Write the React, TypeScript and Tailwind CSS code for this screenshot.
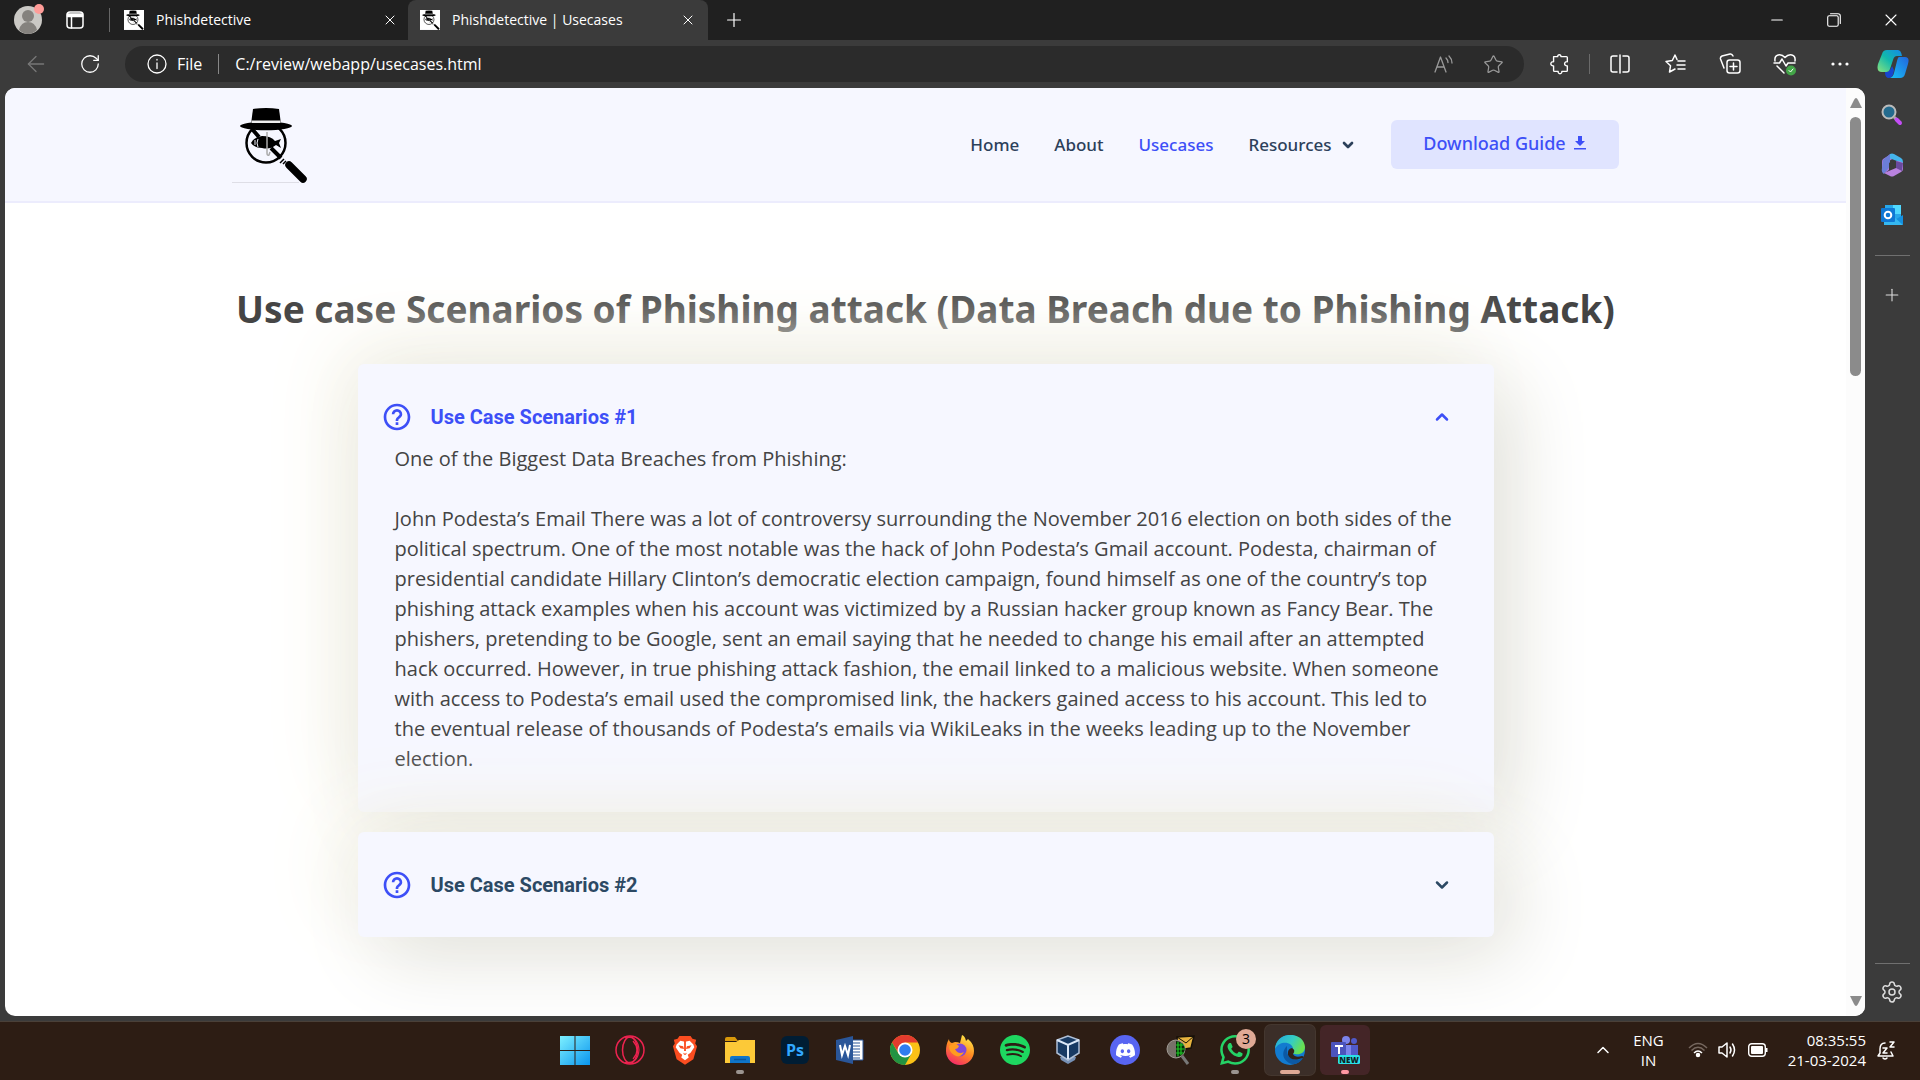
import React from "react";
import { ChevronUp, ChevronDown, Plus, X, Minus, ArrowLeft, RotateCw, Star, Settings } from "lucide-react";
import { BiHelpCircle } from "react-icons/bi";
import { SiDiscord, SiSpotify, SiWhatsapp } from "react-icons/si";

const paragraph =
  "John Podesta’s Email There was a lot of controversy surrounding the November 2016 election on both sides of the political spectrum. One of the most notable was the hack of John Podesta’s Gmail account. Podesta, chairman of presidential candidate Hillary Clinton’s democratic election campaign, found himself as one of the country’s top phishing attack examples when his account was victimized by a Russian hacker group known as Fancy Bear. The phishers, pretending to be Google, sent an email saying that he needed to change his email after an attempted hack occurred. However, in true phishing attack fashion, the email linked to a malicious website. When someone with access to Podesta’s email used the compromised link, the hackers gained access to his account. This led to the eventual release of thousands of Podesta’s emails via WikiLeaks in the weeks leading up to the November election.";

function Detective({ className }: { className: string }) {
  return (
    <svg viewBox="7 5 76 78" className={className} aria-hidden="true">
      <path d="M7 81.500H74" stroke="#dedee6" strokeWidth="1" />
      <circle cx="41" cy="42" r="19.500" fill="none" stroke="#000" strokeWidth="2.500" />
      <path d="m27 28 7 8M46 47l10 10" stroke="#000" strokeWidth="4" />
      <path d="M26 42q3-6 11-7 9 0 13 5l6-2-2 4 2 5-5-3q-6 5-14 3-8 0-11-5Z" />
      <path d="M30 39v5M33 38q-2 4 0 8" stroke="#f6f6ff" strokeWidth="1" fill="none" />
      <path d="M42 31v21q0 3 2 2l1-3" stroke="#aaa" strokeWidth="1.500" fill="none" />
      <path d="m59 58-4 4m6-2-3 3" stroke="#000" strokeWidth="1.500" />
      <path d="m64 64 14 14" stroke="#000" strokeWidth="7.500" strokeLinecap="round" />
      <ellipse cx="41" cy="25" rx="26" ry="4.200" />
      <path d="M28 8q13-2 26 0l2 15H26Z" />
      <path d="M26.500 19.500h29v2.500h-29Z" fill="#eee" />
    </svg>
  );
}

function Favicon() {
  return (
    <span className="flex size-5 shrink-0 items-center justify-center bg-white">
      <Detective className="size-5" />
    </span>
  );
}

function Tab({ title, active }: { title: string; active?: boolean }) {
  return (
    <div className={active ? "flex h-10 w-[300px] items-center rounded-t-lg bg-[#3b3b3b] px-3" : "flex h-10 w-[298px] items-center pr-2.5 pl-3.5"}>
      <Favicon />
      <span className="ml-3 flex-1 text-sm">{title}</span>
      <button aria-label={"Close " + title}><X size={16} strokeWidth={1.5} /></button>
    </div>
  );
}

function Tool({ label, children }: { label: string; children: React.ReactNode }) {
  return <button aria-label={label} className="flex w-[55px] justify-center">{children}</button>;
}

const line = { fill: "none", stroke: "currentColor", strokeWidth: 1.5, strokeLinecap: "round" as const, strokeLinejoin: "round" as const };

function BrowserBars() {
  return (
    <header className="text-white">
      <div className="flex h-10 items-center bg-[#202020]">
        <button aria-label="Profile" className="relative ml-[14px] size-7">
          <svg viewBox="0 0 28 28" className="size-7"><circle cx="14" cy="14" r="14" fill="#cbc9c5" /><circle cx="14" cy="10" r="6" fill="#85827e" /><path d="M5 24q2-8 9-8t9 8q-9 8-18 0Z" fill="#85827e" /></svg>
          <span className="absolute -top-0.5 -right-0.5 size-2.5 rounded-full bg-[#ff9c98]" />
        </button>
        <button aria-label="Tab actions" className="ml-[23px]">
          <svg viewBox="0 0 20 20" className="size-5" {...line}><rect x="2" y="2" width="16" height="16" rx="3" /><path d="M2.500 4h15v2.500h-15Z" fill="currentColor" /><path d="M6.500 7v11" /></svg>
        </button>
        <span className="ml-6 h-6 w-px bg-[#666]" />
        <Tab title="Phishdetective" />
        <Tab title="Phishdetective | Usecases" active />
        <button aria-label="New tab" className="ml-[15px]"><Plus size={22} strokeWidth={1.3} /></button>
        <div className="ml-auto flex items-center pr-px">
          <button aria-label="Minimize" className="flex w-[57px] justify-center"><Minus size={18} strokeWidth={1.5} /></button>
          <button aria-label="Restore" className="flex w-[57px] justify-center"><svg viewBox="0 0 14 14" className="size-[14px]" {...line} strokeWidth={1.1}><rect x=".7" y="2.700" width="10.500" height="10.500" rx="1.500" /><path d="M3.500.7h7.500q2.300 0 2.300 2.300v7.500" /></svg></button>
          <button aria-label="Close window" className="flex w-[57px] justify-center"><X size={20} strokeWidth={1.3} /></button>
        </div>
      </div>
      <div className="flex h-12 items-center bg-[#3b3b3b]">
        <button aria-label="Back" className="ml-[23px] text-[#777]"><ArrowLeft size={26} strokeWidth={1.2} /></button>
        <button aria-label="Refresh" className="mr-6 ml-[30px]"><RotateCw size={22} strokeWidth={1.4} /></button>
        <div className="flex h-9 flex-1 items-center rounded-full bg-[#2b2b2b] pr-5 pl-[22px]">
          <svg viewBox="0 0 20 20" className="size-5" {...line} strokeWidth={1.3}><circle cx="10" cy="10" r="9" /><path d="M10 9v5.500M10 5.500v.5" /></svg>
          <span className="ml-2.5 text-base">File</span>
          <span className="mx-4 h-5 w-px bg-[#888]" />
          <input aria-label="Address" defaultValue="C:/review/webapp/usecases.html" className="min-w-0 flex-1 bg-transparent text-base outline-none" />
          <button aria-label="Read aloud" className="text-[#999]"><svg viewBox="0 0 22 22" className="size-[22px]" {...line} strokeWidth={1.3}><path d="m2 19 5.500-15L13 19M4 14h7M13 5q2 2 2 4.500M16 3q3 3 3 7" /></svg></button>
          <button aria-label="Add to favorites" className="ml-7 text-[#999]"><Star size={21} strokeWidth={1.4} /></button>
        </div>
        <div className="ml-2 flex items-center">
          <Tool label="Extensions"><svg viewBox="0 0 24 24" className="size-[22px]" {...line}><path d="M5 4h4.500C9 1.500 13.500 1 13 4h6q1 0 1 1v4.500c-4-.5-4 5 0 4.500v5q0 1-1 1h-5c.5 3.500-4.500 3.500-4 0H6q-1 0-1-1v-5c-4 .5-4-5 0-4.500Z" /></svg></Tool>
          <span className="mx-0.5 h-5 w-px bg-[#6a6a6a]" />
          <Tool label="Split screen"><svg viewBox="0 0 22 22" className="size-[22px]" {...line}><path d="M8 3H4Q2 3 2 5v12q0 2 2 2h4M14 3h4q2 0 2 2v12q0 2-2 2h-4M11 2v18" /></svg></Tool>
          <Tool label="Favorites"><svg viewBox="0 0 22 22" className="size-[22px]" {...line}><path d="M13 6.500 11 2 8.300 7.500 2 8.500l4.500 4.300-1 6.200 5.500-3M14 8h7M13 12h8M14 16h7" /></svg></Tool>
          <Tool label="Collections"><svg viewBox="0 0 22 22" className="size-[22px]" {...line}><rect x="8" y="7" width="13" height="13" rx="2.500" /><path d="M14.500 10v7M11 13.500h7M5 15 1.500 6Q1 4 3 3l8-2q2-.5 3 2" /></svg></Tool>
          <Tool label="Browser essentials"><svg viewBox="0 0 24 24" className="size-6" {...line}><path d="M2 9C1 2 8 1 12 5.500 16 1 23 2 22 9M1 11h5.500L9 7l4 7 2-3h7M4 14l7 7" /><circle cx="18" cy="18.500" r="5" fill="#43a548" stroke="none" /><path d="m16 18.500 1.500 1.500 2.500-3" strokeWidth="1" /></svg></Tool>
          <Tool label="Menu"><svg viewBox="0 0 18 4" className="h-1 w-[18px]" fill="currentColor"><circle cx="2" cy="2" r="1.600" /><circle cx="9" cy="2" r="1.600" /><circle cx="16" cy="2" r="1.600" /></svg></Tool>
          <button aria-label="Copilot" className="mr-[11px] ml-2.5">
            <svg viewBox="0 0 32 30" className="h-[30px] w-8">
              <defs><linearGradient id="cpa" x1="0" y1="1" x2="1" y2="0"><stop stopColor="#8be37e" /><stop offset=".5" stopColor="#11b9ac" /><stop offset="1" stopColor="#1489e8" /></linearGradient><linearGradient id="cpb" x1="0" y1="1" x2="1" y2="0"><stop stopColor="#18c1f5" /><stop offset="1" stopColor="#2265dd" /></linearGradient></defs>
              <path d="M8 23q5 0 7-6l2 4q-1 8-5 8t-4-6Z" fill="#1746cf" /><path d="M10 1h11q3 0 4 6h-5q-3 0-4 4l-3 9q-1 3-4 3H5q-6 0-4-8L5 5q1-4 5-4Z" fill="url(#cpa)" /><path d="M22 8h6q5 0 3 7l-3 10q-1 4-5 4H13q3-1 4-5l3-12q1-4 2-4Z" fill="url(#cpb)" />
            </svg>
          </button>
        </div>
      </div>
    </header>
  );
}

function SiteHeader() {
  return (
    <div className="border-b-2 border-[#ececfd] bg-[#f6f7ff]">
      <div className="mx-auto flex h-[113px] w-full max-w-[1388px] items-center">
        <a href="#home" aria-label="Phishdetective home"><Detective className="h-[78px] w-[76px]" /></a>
        <nav className="mr-px ml-auto flex items-center gap-[35px] font-['Noto_Sans'] text-[17px] font-medium text-[#2c405a]">
          <a href="#home">Home</a>
          <a href="#about">About</a>
          <a href="#usecases" className="text-[#3d4ff7]">Usecases</a>
          <button className="flex items-center gap-2">Resources <ChevronDown size={16} strokeWidth={4} /></button>
          <a href="#download" className="flex h-[49px] w-[228px] items-center justify-center gap-2 rounded-md bg-[#e0e4ff] pb-1 text-lg text-[#3d4ff7]">
            Download Guide
            <svg viewBox="0 0 12 14" className="h-[14px] w-3" fill="currentColor"><path d="M4 0h4v5h3L6 10 1 5h3ZM0 12h12v1.500H0Z" /></svg>
          </a>
        </nav>
      </div>
    </div>
  );
}

const card = "rounded-md bg-[#f6f7ff] pr-[26px] pl-[23px] shadow-[20px_20px_80px_#e2e2dc,-20px_-20px_80px_#f6f4e8]";

function Question({ n, open, children }: { n: number; open?: boolean; children?: React.ReactNode }) {
  return (
    <section className={card}>
      <button aria-expanded={!!open} className={open ? "flex h-[105px] w-full items-center text-[#3d4ff7]" : "flex h-[105px] w-full items-center text-[#2c4964]"}>
        <BiHelpCircle size={32} className="text-[#3d4ff7]" />
        <span className="ml-[18px] font-['Roboto'] text-xl font-bold">Use Case Scenarios #{n}</span>
        <span className="mr-4 ml-auto">{open ? <ChevronUp size={20} strokeWidth={3} /> : <ChevronDown size={20} strokeWidth={3} />}</span>
      </button>
      {children}
    </section>
  );
}

function PageBody() {
  return (
    <main className="flex-1 pt-[77px] font-['Open_Sans'] text-[#444]">
      <h1 className="text-center font-['Noto_Sans'] text-[37px] leading-[58px] font-bold whitespace-nowrap">Use case Scenarios of Phishing attack (Data Breach due to Phishing Attack)</h1>
      <div className="mx-auto mt-[26px] flex max-w-[1136px] flex-col gap-5">
        <Question n={1} open>
          <div className="-mt-[25px] pr-2 pb-[38px] pl-3.5 text-xl leading-[30px]">
            <p>One of the Biggest Data Breaches from Phishing:</p>
            <p className="mt-[30px]">{paragraph}</p>
          </div>
        </Question>
        <Question n={2} />
      </div>
    </main>
  );
}

function Sidebar() {
  return (
    <aside className="flex w-[55px] shrink-0 flex-col items-center bg-[#3b3b3b] pt-4 pr-px pb-3 text-[#ddd]">
      <button aria-label="Search"><svg viewBox="0 0 22 22" className="size-[22px]"><circle cx="8" cy="8" r="6.500" fill="#246b8e" stroke="#bbb" strokeWidth="2" /><path d="m13 13 2 2" stroke="#aaa" strokeWidth="3" /><path d="m15.500 15.500 3.500 3.500" stroke="#c34df5" strokeWidth="4" strokeLinecap="round" /></svg></button>
      <button aria-label="Microsoft 365" className="mt-[27px]"><svg viewBox="0 0 22 24" className="h-6 w-[22px]"><path d="M10 1 2 6q-1 1-1 3v7q0 3 3 4l4-3V8l5-3Z" fill="#a678de" /><path d="M9 1q2-1 4 0l7 4q2 1 2 4v4l-6-5-8-3Z" fill="#45b5ec" /><path d="M9 1v12l-6 8q-3-2-2-6l1-8Z" fill="#6b7ed8" /><path d="M22 10v6q0 2-2 3l-7 4q-2 1-4 0l-6-3 12-5V8q5 0 7 2Z" fill="#b982df" /><path d="m22 10-1 8-6-3V8Z" fill="#6a4a9e" /><path d="m11 8 4 2v4l-4 2-3-2v-4Z" fill="#3b3b3b" /></svg></button>
      <button aria-label="Outlook" className="mt-[27px]"><Outlook /></button>
      <hr className="mt-[29px] w-[35px] border-[#707070]" />
      <button aria-label="Customize" className="mt-[29px]"><Plus size={20} strokeWidth={1.3} /></button>
      <hr className="mt-auto w-[35px] border-[#707070]" />
      <button aria-label="Settings" className="mt-4"><Settings size={24} strokeWidth={1.5} /></button>
    </aside>
  );
}

function Outlook() {
  return (
    <svg viewBox="0 0 22 22" className="size-[22px]"><path d="M4 1h16v18H4Z" fill="#28a8ea" /><path d="M12 1h8v9h-8Z" fill="#50d9ff" /><path d="m22 11-10 6v4h9q1 0 1-1Z" fill="#1490df" /><path d="M3 12h9l10 9H3Z" fill="#35b8f1" /><rect y="4" width="14" height="14" rx="1" fill="#0f78d4" /><circle cx="7" cy="11" r="3.300" fill="none" stroke="#fff" strokeWidth="2" /></svg>
  );
}

function Chrome() {
  return (
    <svg viewBox="0 0 30 30" className="size-[30px]"><circle cx="15" cy="15" r="15" fill="#fbc116" /><path d="M2 7.500A15 15 0 0 1 28 7.500H15L9 18.500Z" fill="#e33b2e" /><path d="M2 7.500A15 15 0 0 0 15 30l6.500-11.500-13 0Z" fill="#229342" /><circle cx="15" cy="15" r="7.500" fill="#fff" /><circle cx="15" cy="15" r="5.800" fill="#2f7df0" /></svg>
  );
}

function Edge() {
  return (
    <svg viewBox="0 0 30 30" className="size-[30px]"><defs><linearGradient id="edg" x1="0" y1="0" x2="1" y2=".4"><stop stopColor="#24a8de" /><stop offset=".6" stopColor="#35cdc2" /><stop offset="1" stopColor="#68e052" /></linearGradient></defs><circle cx="15" cy="15" r="15" fill="#127bd0" /><path d="M0 14C1-5 29-4 30 12c0 6-5 8-10 7-3 0-4-2-2-4C19 7 5 4 0 14Z" fill="url(#edg)" /><path d="M12 11C3 20 12 30 20 29q5-1 8-6c-8 4-16 0-16-7Z" fill="#0c59a4" /><path d="M17 13q-5 1-4 7 3 6 11 4l4-1q1-2-1-2-7 2-9-2 3-4-1-6Z" fill="#32221a" /></svg>
  );
}

const apps: { name: string; icon: React.ReactNode; dot?: string; box?: string }[] = [
  { name: "Start", icon: <svg viewBox="0 0 30 30" className="size-[30px]"><defs><linearGradient id="win" x1="0" y1="0" x2="1" y2="1"><stop stopColor="#7df0ff" /><stop offset="1" stopColor="#0a95ee" /></linearGradient></defs><path d="M0 1h14.500v14H0Zm15.500 0H30v14H15.500ZM0 16h14.500v14H0Zm15.500 0H30v14H15.500Z" fill="url(#win)" /></svg> },
  { name: "Opera GX", icon: <svg viewBox="0 0 30 30" className="size-[30px]" fill="none" stroke="#ed2350" strokeWidth="1.500"><circle cx="15" cy="15" r="14" /><ellipse cx="15" cy="15" rx="7.500" ry="13" /><path d="M18 6q8 9 0 18M10 2.500q13-2 14 12.500-1 14-14 12.500" strokeWidth="1.200" /></svg> },
  { name: "Brave", icon: <svg viewBox="0 0 28 32" className="h-[30px] w-[26px]"><path d="m8 1-2 3-4 1 1 4-2 3 4 14 9 6 9-6 4-14-2-3 1-4-4-1-2-3Z" fill="#fb4d20" /><path d="m5 10 4-4 5 1 5-1 4 4 1 3-4 6-3 2 1 3-4 3-4-3 1-3-3-2-4-6Z" fill="#fff" /><path d="m7 11 5 1 1 3-4-1Zm14 0-5 1-1 3 4-1ZM12 19l2 1 2-1-1 2h-2ZM13 6h2v11h-2Z" fill="#fb4d20" /></svg> },
  { name: "File Explorer", icon: <svg viewBox="0 0 30 28" className="h-7 w-[30px]"><path d="M0 3q0-2 2-2h8l3 4H0Z" fill="#d9980a" /><path d="M0 6h11l3-2h16v23H0Z" fill="#fcc938" /><path d="M5 27v-5q0-2 2-2h16q2 0 2 2v5Z" fill="#0f75c9" /><path d="M9 23.500h12" stroke="#07569d" strokeWidth="1.500" /></svg>, dot: "w-2 bg-[#9b9490]" },
  { name: "Photoshop", icon: <span className="flex size-7 items-center justify-center rounded-md bg-[#001d34] font-['Open_Sans'] text-base font-bold text-[#31a8ff]">Ps</span> },
  { name: "Word", icon: <svg viewBox="0 0 28 28" className="size-7"><path d="M14 4h13v20H14Z" fill="#fff" stroke="#2a5699" /><path d="M17 7h7M17 10h7M17 13h7M17 16h7M17 19h7M17 22h7" stroke="#2a5699" strokeWidth="1" /><path d="M0 4 17 0v28L0 24Z" fill="#2a5699" /><path d="m4 9 2 10 3-9 3 9 2-10" fill="none" stroke="#fff" strokeWidth="2" /></svg> },
  { name: "Chrome", icon: <Chrome /> },
  { name: "Firefox", icon: <svg viewBox="0 0 30 30" className="size-[30px]"><defs><linearGradient id="ffx" x1=".8" y1="0" x2=".3" y2="1"><stop stopColor="#fff04a" /><stop offset=".5" stopColor="#ff8b22" /><stop offset="1" stopColor="#f4286a" /></linearGradient></defs><path d="M4 4q0 3 3 4l3-1q3 0 5 1l2-8q3 1 4 6l2-2q6 5 6 12a14 14 0 1 1-28 0q0-7 3-12Z" fill="url(#ffx)" /><circle cx="15" cy="15" r="6.500" fill="#8148d8" /><path d="M4 11q6-4 10 0-1 3-4 3 3 6 9 3-4 7-10 3-5-3-5-9Z" fill="#ff9c20" /></svg> },
  { name: "Spotify", icon: <SiSpotify size={30} color="#1ed760" /> },
  { name: "VirtualBox", icon: <svg viewBox="0 0 28 30" className="h-[30px] w-7"><path d="m4 22 1 3 7 4 7-4 1-3Z" fill="#7690b5" /><path d="M12 1 1 5v13l11 7 11-7V5Z" fill="#183a63" stroke="#aebfd6" strokeWidth="1.500" /><path d="m1 5 11 5 11-5M12 10v14" stroke="#dce8f7" strokeWidth="2" fill="none" /></svg> },
  { name: "Discord", icon: <span className="flex size-[30px] items-center justify-center rounded-full bg-[#5865f2] text-white"><SiDiscord size={19} /></span> },
  { name: "Mail inspector", icon: <svg viewBox="0 0 30 30" className="size-[30px]"><path d="m12 2 17-1-3 12-13 2Z" fill="#e7b33e" stroke="#171109" strokeWidth="1.500" /><path d="m12 2 9 6 8-7" stroke="#171109" fill="none" /><circle cx="11" cy="14" r="9" fill="#777169" stroke="#a09a94" /><path d="M11 6q8 1 9 8-1 7-9 8Z" fill="#062b06" /><path d="M13 7v14M16 8v12M11 10h8M11 14h9M11 18h8" stroke="#1fc926" strokeWidth="1.200" /><path d="m17 21 6 8" stroke="#777" strokeWidth="3" /></svg> },
  { name: "WhatsApp", icon: <><SiWhatsapp size={30} color="#25d366" /><span className="absolute top-1 right-1 flex size-5 items-center justify-center rounded-full bg-[#dfa995] text-sm text-black">3</span></>, dot: "w-2 bg-[#9b9490]" },
  { name: "Edge", icon: <Edge />, dot: "w-5 bg-[#dfa995]", box: "bg-[#3b2e28] ring-1 ring-[#44372f]" },
  { name: "Teams", icon: <svg viewBox="0 0 30 30" className="size-[30px]"><circle cx="16" cy="5" r="4" fill="#7b83eb" /><circle cx="24" cy="6" r="3" fill="#5059c9" /><path d="M9 10h12v12H9Z" fill="#7b83eb" /><path d="M21 10h7v10h-7Z" fill="#5059c9" /><rect x="1" y="7" width="15" height="15" rx="1" fill="#4b53bc" /><path d="M5 11h8M9 11v8" stroke="#fff" strokeWidth="2" /><rect x="8" y="20" width="22" height="9" rx="1.500" fill="#29e1e8" /><text x="19" y="27.500" textAnchor="middle" fontFamily="Open Sans" fontWeight="800" fontSize="8" fill="#102326">NEW</text></svg>, dot: "w-2 bg-[#ff98a2]", box: "bg-[#442527]" },
];

function Taskbar() {
  return (
    <footer className="grid h-[59px] shrink-0 grid-cols-[1fr_auto_1fr] items-center border-t border-[#4a4038] bg-[#2d1d14] pb-0.5 text-white">
      <div />
      <div className="flex gap-[5px]">
        {apps.map((a) => (
          <button key={a.name} aria-label={a.name} className={"relative flex size-[50px] items-center justify-center rounded-md " + (a.box ?? "")}>
            {a.icon}
            {a.dot && <span className={"absolute bottom-px h-1 rounded-full " + a.dot} />}
          </button>
        ))}
      </div>
      <div className="flex items-center justify-end pr-6 text-[15px] leading-5">
        <button aria-label="Hidden icons"><ChevronUp size={20} strokeWidth={1.8} /></button>
        <button className="ml-5 text-center">ENG<br />IN</button>
        <button aria-label="Wi-Fi" className="ml-6"><svg viewBox="0 0 20 16" className="h-4 w-5" fill="none" stroke="#fff" strokeWidth="1.500"><path d="M1 6q9-9 18 0M3.500 8.500q6.500-6.500 13 0" stroke="#75675e" /><path d="M6 11q4-4 8 0" /><circle cx="10" cy="13" r="1.500" fill="#fff" /></svg></button>
        <button aria-label="Volume" className="ml-2.5"><svg viewBox="0 0 20 18" className="h-[18px] w-5" {...line}><path d="M1 6h3l5-4v14l-5-4H1Zm11 0q2 3 0 6m2.500-9q4 6 0 12" /></svg></button>
        <button aria-label="Battery" className="ml-2.5"><svg viewBox="0 0 20 14" className="h-[14px] w-5"><rect x=".7" y=".7" width="16.600" height="12.600" rx="3" fill="none" stroke="#fff" strokeWidth="1.400" /><rect x="3" y="3" width="12" height="8" rx="1" fill="#fff" /><path d="M18.500 5v4" stroke="#fff" strokeWidth="2" /></svg></button>
        <button className="ml-5 text-right">08:35:55<br />21-03-2024</button>
        <button aria-label="Notifications" className="ml-2.5"><svg viewBox="0 0 20 20" className="size-5" {...line}><path d="M9 3Q4 3 4 9v4l-2 3h15l-2-4M7 18q2 2 4 0M7 8h4l-4 5h4M14 2h4l-4 5h4" /></svg></button>
      </div>
    </footer>
  );
}

export default function App() {
  return (
    <div className="flex h-screen flex-col overflow-hidden bg-[#3b3b3b] font-['Open_Sans',sans-serif]">
      <BrowserBars />
      <div className="flex min-h-0 flex-1 pb-[5px] pl-[5px]">
        <div className="flex min-w-0 flex-1 overflow-hidden rounded-[10px] bg-white">
          <div className="flex min-w-0 flex-1 flex-col overflow-hidden">
            <SiteHeader />
            <PageBody />
          </div>
          <div className="flex w-[19px] shrink-0 flex-col items-center bg-[#fcfcfc] py-2.5 text-[#8b8b8b]">
            <svg viewBox="0 0 12 10" className="h-2.5 w-3" fill="currentColor"><path d="M6 0q1 0 2 2l4 8H0l4-8q1-2 2-2Z" /></svg>
            <div className="mt-[9px] h-[259px] w-[11px] rounded-full bg-current" />
            <svg viewBox="0 0 12 10" className="mt-auto h-2.5 w-3" fill="currentColor"><path d="M6 10q-1 0-2-2L0 0h12L8 8q-1 2-2 2Z" /></svg>
          </div>
        </div>
        <Sidebar />
      </div>
      <Taskbar />
    </div>
  );
}
